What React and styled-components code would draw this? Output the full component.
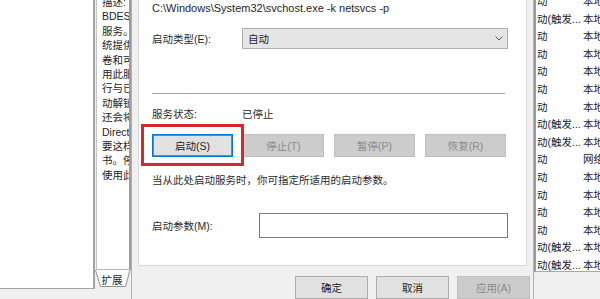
import React from "react";
import styled, { createGlobalStyle } from "styled-components";

const GlobalStyle = createGlobalStyle`
  html, body {
    margin: 0;
    padding: 0;
    background: #f0f0f0;
  }
  body {
    font-family: "Liberation Sans", "Noto Sans CJK SC", sans-serif;
    font-size: 10.5px;
    color: #222;
  }
`;

// 左侧服务描述文字 (被右侧对话框遮住，只露出前几个字)
const descLines = [
  "描述:",
  "BDESV",
  "服务。",
  "统提供",
  "卷和可",
  "用此服",
  "行与已",
  "动解锁",
  "还会将",
  "Direct",
  "要这样",
  "书。停",
  "使用此",
];

const listRows = [
  ["动", "本地"],
  ["动(触发...", "本地"],
  ["动", "本地"],
  ["动", "本地"],
  ["动", "本地"],
  ["动", "本地"],
  ["动", "本地"],
  ["动(触发...", "本地"],
  ["动(触发...", "本地"],
  ["动", "网络"],
  ["动", "本地"],
  ["动", "本地"],
  ["动", "本地"],
  ["动", "本地"],
  ["动(触发...", "本地"],
  ["动(触发...", "本地"],
];

const App = () => {
  return (
    <>
      <GlobalStyle />
      <Screen>
        <LeftPane />

        <DescColumn>
          <DescBox>
            <DescText>
              {descLines.map((line, i) => (
                <DescLine key={i}>{line}</DescLine>
              ))}
            </DescText>
          </DescBox>
          <Tab>
            <TabShape width="36" height="18" viewBox="0 0 36 18">
              <path
                d="M0.5 0 L5.5 16.5 L30.5 16.5 L35 0"
                fill="#fff"
                stroke="#8f8f8f"
                strokeWidth="1"
              />
            </TabShape>
            <TabLabel>扩展</TabLabel>
          </Tab>
        </DescColumn>

        <Dialog>
          <Panel>
            <PathLine>C:\Windows\System32\svchost.exe -k netsvcs -p</PathLine>

            <FieldRow $top={12}>
              <Label $width={90}>启动类型(E):</Label>
              <Select>
                <span>自动</span>
                <svg width="8" height="5" viewBox="0 0 8 5">
                  <path d="M0.5 0.5 L4 4 L7.5 0.5" fill="none" stroke="#555" strokeWidth="1" />
                </svg>
              </Select>
            </FieldRow>

            <Separator />

            <FieldRow $top={12}>
              <Label $width={90}>服务状态:</Label>
              <Value>已停止</Value>
            </FieldRow>

            <ActionRow>
              <Highlight>
                <Button $focused>启动(S)</Button>
                <RedBox />
              </Highlight>
              <Button disabled>停止(T)</Button>
              <Button disabled>暂停(P)</Button>
              <Button disabled>恢复(R)</Button>
            </ActionRow>

            <Hint>当从此处启动服务时，你可指定所适用的启动参数。</Hint>

            <FieldRow $top={25}>
              <Label $width={107}>启动参数(M):</Label>
              <TextInput />
            </FieldRow>
          </Panel>

          <Footer>
            <FooterButton>确定</FooterButton>
            <FooterButton>取消</FooterButton>
            <FooterButton disabled>应用(A)</FooterButton>
          </Footer>
        </Dialog>

        <ListPane>
          <ListBody>
            {listRows.map(([a, b], i) => (
              <ListRow key={i}>
                <ListCell $width={46}>{a}</ListCell>
                <ListCell>{b}</ListCell>
              </ListRow>
            ))}
          </ListBody>
        </ListPane>
      </Screen>
    </>
  );
};

//! 레이아웃 --------------------------
const Screen = styled.div`
  display: flex;
  width: 600px;
  height: 299px;
  overflow: hidden;
  background: #f0f0f0;
`;

const LeftPane = styled.div`
  flex-shrink: 0;
  width: 93px;
  height: 288px;
  background: #fff;
  border-right: 2px solid #a3a3a3;
  border-bottom: 1px solid #a3a3a3;
`;

const DescColumn = styled.div`
  flex-shrink: 0;
  width: 36px;
  display: flex;
  flex-direction: column;
`;

const DescBox = styled.div`
  height: 269px;
  margin-left: 1px;
  background: #fff;
  border-left: 1px solid #c4c4c4;
  border-right: 2px solid #9c9c9c;
  border-bottom: 1px solid #b4b4b4;
  padding-left: 5px;
  overflow: hidden;
`;

const DescText = styled.div`
  margin-top: -5px;
`;

const DescLine = styled.div`
  height: 14.4px;
  line-height: 14.4px;
  white-space: nowrap;
  overflow: hidden;
`;

const Tab = styled.div`
  position: relative;
  height: 18px;
  display: flex;
  justify-content: center;
  align-items: center;
`;

const TabShape = styled.svg`
  position: absolute;
  left: 0;
  top: 0;
`;

const TabLabel = styled.span`
  position: relative;
  font-size: 10.5px;
  margin-left: -2px;
`;

const Dialog = styled.div`
  flex-shrink: 0;
  box-sizing: border-box;
  width: 403px;
  display: flex;
  flex-direction: column;
  background: #f0f0f0;
  border-left: 1px solid #b0b0b0;
  border-right: 1px solid #b0b0b0;
`;

const Panel = styled.div`
  box-sizing: border-box;
  height: 268px;
  margin-left: 6px;
  width: 389px;
  background: #fff;
  border: 1px solid #d9d9d9;
  border-top: none;
  padding: 0 18px 0 13px;
  display: flex;
  flex-direction: column;
`;

const PathLine = styled.div`
  height: 16px;
  line-height: 16px;
  font-size: 11px;
  white-space: nowrap;
  color: #262626;
`;

const FieldRow = styled.div`
  display: flex;
  align-items: center;
  margin-top: ${(p) => p.$top}px;
`;

const Label = styled.div`
  width: ${(p) => p.$width}px;
  flex-shrink: 0;
  line-height: 16px;
  white-space: nowrap;
  color: #2a2a2a;
`;

const Value = styled.div`
  line-height: 16px;
  color: #2a2a2a;
`;

const Select = styled.div`
  box-sizing: border-box;
  flex: 1;
  height: 21px;
  display: flex;
  align-items: center;
  justify-content: space-between;
  padding: 0 4px 0 5px;
  background: #e5e5e5;
  border: 1px solid #adadad;
`;

const Separator = styled.div`
  height: 1px;
  background: #a0a0a0;
  margin: 44px 3px 0 0;
`;

const ActionRow = styled.div`
  display: flex;
  gap: 10px;
  margin-top: 12px;
`;

const Highlight = styled.div`
  position: relative;
`;

const RedBox = styled.div`
  position: absolute;
  left: -11px;
  top: -10px;
  width: 103px;
  height: 42px;
  box-sizing: border-box;
  border: 3px solid #d7262c;
  pointer-events: none;
`;

const Button = styled.button`
  all: unset;
  box-sizing: border-box;
  width: 81px;
  height: 23px;
  display: flex;
  align-items: center;
  justify-content: center;
  font-size: 10.5px;
  color: #222;
  background: #e1e1e1;
  border: 1px solid ${(p) => (p.$focused ? "#0078d7" : "#adadad")};
  box-shadow: ${(p) => (p.$focused ? "inset 0 0 0 1px #3d94dc" : "none")};
  &:disabled {
    background: #cccccc;
    border-color: #bfbfbf;
    color: #8a8a8a;
  }
`;

const Hint = styled.div`
  margin-top: 15px;
  line-height: 16px;
  white-space: nowrap;
  color: #2a2a2a;
`;

const TextInput = styled.div`
  box-sizing: border-box;
  width: 249px;
  height: 25px;
  background: #fff;
  border: 1px solid #7a7a7a;
`;

const Footer = styled.div`
  display: flex;
  justify-content: flex-end;
  gap: 8px;
  padding: 10px 3px 0 0;
`;

const FooterButton = styled(Button)`
  width: 73px;
`;

const ListPane = styled.div`
  flex: 1;
  height: 271px;
  background: #fff;
  border-left: 2px solid #9a9a9a;
  border-bottom: 1px solid #a8a8a8;
  overflow: hidden;
`;

const ListBody = styled.div`
  margin-top: -7px;
  padding-left: 1px;
`;

const ListRow = styled.div`
  display: flex;
  height: 17.6px;
  line-height: 17.6px;
  white-space: nowrap;
`;

const ListCell = styled.div`
  flex-shrink: 0;
  width: ${(p) => (p.$width ? `${p.$width}px` : "auto")};
  overflow: hidden;
`;

export default App;
